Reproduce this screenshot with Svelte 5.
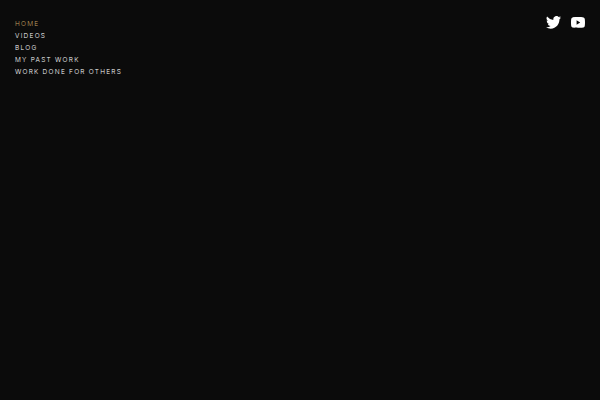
<script>
  const links = ["Home", "Videos", "Blog", "My Past Work", "Work Done For Others"];
</script>

<div class="page">
  <nav>
    <ul>
      {#each links as link, i}
        <li><a href="#top" class:active={i === 0}>{link}</a></li>
      {/each}
    </ul>
  </nav>
  <div class="social">
    <a href="#top" aria-label="Twitter">
      <svg width="15" height="13" viewBox="0 0 24 20" preserveAspectRatio="none">
        <path fill="#fff" d="M24 2.37a9.6 9.6 0 0 1-2.83.8A5 5 0 0 0 23.34.4a9.9 9.9 0 0 1-3.13 1.2 4.92 4.92 0 0 0-8.39 4.49A14 14 0 0 1 1.67.94a4.93 4.93 0 0 0 1.52 6.57 4.9 4.9 0 0 1-2.23-.62v.06a4.93 4.93 0 0 0 3.95 4.83 5 5 0 0 1-2.22.08 4.93 4.93 0 0 0 4.6 3.42A9.9 9.9 0 0 1 0 17.33 13.9 13.9 0 0 0 7.55 19.5c9.05 0 14-7.5 14-14v-.64A10 10 0 0 0 24 2.37z"/>
      </svg>
    </a>
    <a href="#top" aria-label="YouTube">
      <svg width="14" height="11" viewBox="0 0 24 18" preserveAspectRatio="none">
        <path fill="#fff" d="M23.5 2.8A3 3 0 0 0 21.4.7C19.5.2 12 .2 12 .2s-7.5 0-9.4.5A3 3 0 0 0 .5 2.8C0 4.7 0 9 0 9s0 4.3.5 6.2a3 3 0 0 0 2.1 2.1c1.9.5 9.4.5 9.4.5s7.5 0 9.4-.5a3 3 0 0 0 2.1-2.1C24 13.3 24 9 24 9s0-4.3-.5-6.2zM9.6 12.6V5.4L15.8 9z"/>
      </svg>
    </a>
  </div>
</div>

<style>
  :global(body) {
    background: #0b0b0b;
  }

  .page {
    height: 400px;
    display: flex;
    justify-content: space-between;
    align-items: flex-start;
    padding: 15px 15px 0;
    box-sizing: border-box;
    overflow: hidden;
  }

  ul {
    list-style: none;
    margin: 0;
    padding: 0;
  }

  li {
    height: 12px;
    line-height: 12px;
  }

  nav a {
    font-family: "Inter", "Liberation Sans", Arial, sans-serif;
    font-size: 6.5px;
    font-weight: 300;
    letter-spacing: 1.25px;
    text-transform: uppercase;
    text-decoration: none;
    color: #fff;
  }

  nav a.active {
    color: #c4a264;
  }

  .social {
    display: flex;
    align-items: center;
    gap: 10px;
    padding-top: 1px;
  }

  .social a {
    display: flex;
  }
</style>
